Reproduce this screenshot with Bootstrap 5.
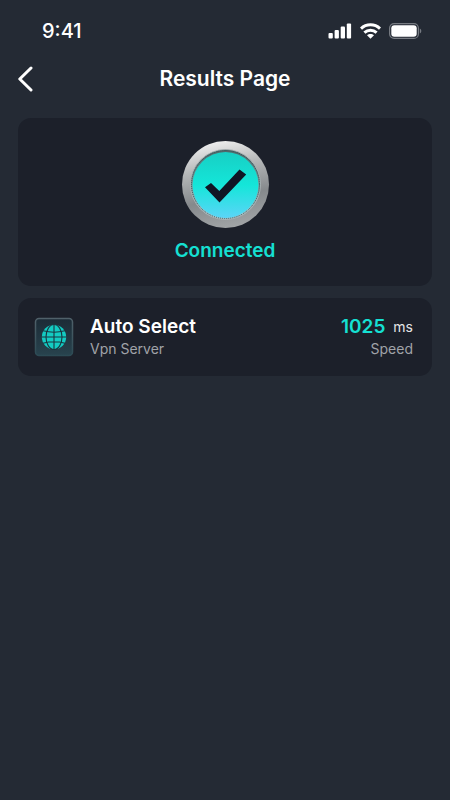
<!DOCTYPE html>
<html lang="en">
<head>
<meta charset="utf-8">
<meta name="viewport" content="width=device-width, initial-scale=1">
<title>Results Page</title>
<link href="https://cdn.jsdelivr.net/npm/bootstrap@5.3.0/dist/css/bootstrap.min.css" rel="stylesheet">
<style>
  body { background: #242a34; color: #fff; font-family: Inter, "Liberation Sans", sans-serif; }
  .status-bar { height: 59px; padding: 3px 28px 0 42px; font-size: 20px; line-height: 24px; font-weight: 500; }
  .page-head { height: 40px; padding: 0 18px; margin-bottom: 19px; }
  .page-head h1 { font-size: 21px; line-height: 26px; font-weight: 600; }
  .side { width: 40px; }
  .back { line-height: 0; }
  .content { padding: 0 18px; gap: 12px; }
  .panel { background: #1c202a; border-radius: 13px; }
  .result { padding: 20px 16px 23px; gap: 7px; }
  .accent { color: #15e0d3; }
  .label-lg { font-size: 19px; line-height: 24px; font-weight: 600; }
  .label-sm { font-size: 14px; line-height: 20px; color: #a0a3a8; }
  .unit { font-size: 14px; font-weight: 400; color: #e4e5e7; }
  .server { padding: 17px 19px 17px 16px; gap: 16px; }
</style>
</head>
<body>
<div class="status-bar d-flex align-items-center justify-content-between">
  <span>9:41</span>
  <div class="d-flex align-items-center gap-2">
    <svg width="24" height="16" viewBox="0 0 24 16" fill="#fff" aria-hidden="true">
      <rect x=".5" y="10" width="4.300" height="5.500" rx="1"/><rect x="6.600" y="7" width="4.300" height="8.500" rx="1"/><rect x="12.700" y="3.500" width="4.300" height="12" rx="1"/><rect x="18.800" y=".5" width="4.300" height="15" rx="1"/>
    </svg>
    <svg width="21" height="16" viewBox="0 0 21 16" fill="none" stroke="#fff" stroke-width="3" aria-hidden="true">
      <path d="M1 5.600C6.300.6 14.700.6 20 5.600M4.400 9.600c3.500-3.200 8.700-3.200 12.200 0"/>
      <path d="M10.500 15.800 7 12.300c1.900-1.700 5.100-1.700 7 0z" fill="#fff" stroke="none"/>
    </svg>
    <svg width="33" height="16" viewBox="0 0 33 16" aria-hidden="true">
      <rect x=".6" y=".6" width="28.800" height="14.800" rx="4.500" fill="none" stroke="#777b82" stroke-width="1.200"/>
      <rect x="2.300" y="2.300" width="25.400" height="11.400" rx="3" fill="#fff"/>
      <path d="M30.800 5.500c2 .8 2 4.200 0 5z" fill="#777b82"/>
    </svg>
  </div>
</div>

<header class="page-head d-flex align-items-center justify-content-between">
  <div class="side">
    <button type="button" class="back btn p-0 border-0" aria-label="Back">
      <svg width="16" height="26" viewBox="0 0 16 26" fill="none" stroke="#fff" stroke-width="3" stroke-linecap="round" stroke-linejoin="round"><path d="M13 2 1.800 13 13 24"/></svg>
    </button>
  </div>
  <h1 class="m-0">Results Page</h1>
  <div class="side"></div>
</header>

<main class="content d-flex flex-column">
  <section class="panel result d-flex flex-column align-items-center">
    <svg width="94" height="94" viewBox="0 0 94 94" aria-hidden="true">
      <defs>
        <linearGradient id="rim" x1=".4" y1="0" x2=".6" y2="1"><stop offset="0" stop-color="#eeeeee"/><stop offset=".3" stop-color="#b5b7b8"/><stop offset=".65" stop-color="#85898c"/><stop offset="1" stop-color="#a2a5a7"/></linearGradient>
        <linearGradient id="groove" x1="0" y1="0" x2="0" y2="1"><stop offset="0" stop-color="#4e6668"/><stop offset=".5" stop-color="#7e9799"/><stop offset="1" stop-color="#b9d3da"/></linearGradient>
        <linearGradient id="face" x1="0" y1="0" x2="0" y2="1"><stop offset="0" stop-color="#17cfc4"/><stop offset=".5" stop-color="#14e6d9"/><stop offset="1" stop-color="#5bd5f7"/></linearGradient>
      </defs>
      <circle cx="47.500" cy="46.500" r="43.500" fill="url(#rim)"/>
      <circle cx="47.500" cy="46.500" r="35" fill="url(#groove)" stroke="#a8b0b2" stroke-width="1"/>
      <circle cx="47.500" cy="47" r="33" fill="url(#face)"/>
      <circle cx="47.500" cy="46.500" r="34" fill="none" stroke="#2e5558" stroke-width="1" stroke-dasharray="1 1"/>
      <path d="M27 49.300 33 45 41.300 53 61.500 31.500 68.200 36.500 41.500 64.500z" fill="#101624"/>
    </svg>
    <div class="label-lg accent">Connected</div>
  </section>

  <section class="panel server d-flex align-items-center">
    <svg width="40" height="40" viewBox="0 0 40 40" aria-hidden="true">
      <defs>
        <linearGradient id="tile" x1="0" y1="0" x2="0" y2="1"><stop offset="0" stop-color="#1c2b36"/><stop offset="1" stop-color="#28434e"/></linearGradient>
        <linearGradient id="edge" x1="0" y1="0" x2="0" y2="1"><stop offset="0" stop-color="#50616a"/><stop offset="1" stop-color="#2c4a54"/></linearGradient>
      </defs>
      <rect x="1.500" y="1.500" width="37" height="37" rx="3.500" fill="url(#tile)" stroke="url(#edge)" stroke-width="1.500"/>
      <circle cx="20" cy="20" r="12.200" fill="#13cbc2"/>
      <g fill="none" stroke="#1a3640" stroke-width="1.100"><ellipse cx="20" cy="20" rx="8" ry="12.500"/><path d="M20 7.500v25M7.500 20h25M9 13.800q11 2.800 22 0M9 26.200q11-2.800 22 0"/></g>
    </svg>
    <div class="flex-grow-1">
      <div class="label-lg">Auto Select</div>
      <div class="label-sm">Vpn Server</div>
    </div>
    <div class="text-end">
      <div class="label-lg d-flex align-items-center justify-content-end gap-2"><span class="accent">1025</span><span class="unit">ms</span></div>
      <div class="label-sm">Speed</div>
    </div>
  </section>
</main>
<script src="https://cdn.jsdelivr.net/npm/bootstrap@5.3.0/dist/js/bootstrap.bundle.min.js"></script>
</body>
</html>
